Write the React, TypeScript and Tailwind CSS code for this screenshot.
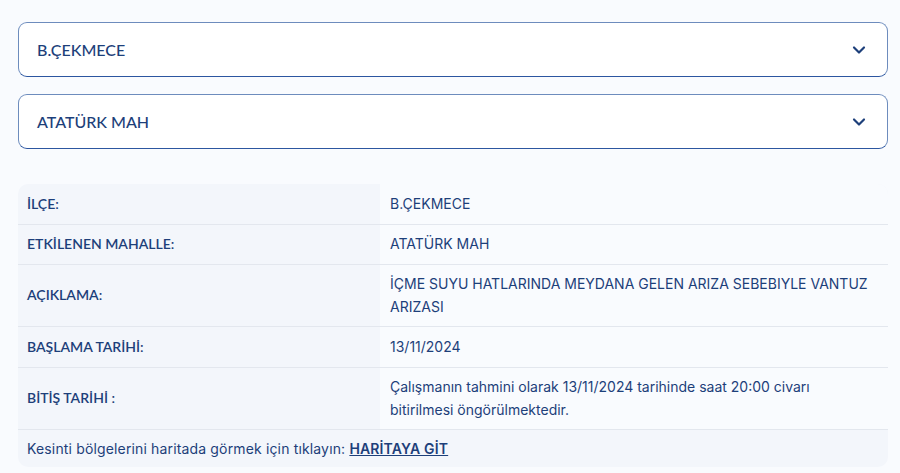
import React from "react";

const rows = [
  { label: "İLÇE:", value: "B.ÇEKMECE", h: "min-h-[40px]" },
  { label: "ETKİLENEN MAHALLE:", value: "ATATÜRK MAH", h: "min-h-[39px]" },
  {
    label: "AÇIKLAMA:",
    value: "İÇME SUYU HATLARINDA MEYDANA GELEN ARIZA SEBEBIYLE VANTUZ ARIZASI",
    h: "min-h-[61px]",
  },
  { label: "BAŞLAMA TARİHİ:", value: "13/11/2024", h: "min-h-[40px]" },
  {
    label: "BİTİŞ TARİHİ :",
    value: "Çalışmanın tahmini olarak 13/11/2024 tarihinde saat 20:00 civarı bitirilmesi öngörülmektedir.",
    h: "min-h-[61px]",
  },
];

function Chevron() {
  return (
    <svg width="20" height="20" viewBox="0 0 24 24" fill="none" stroke="#1d3f7a" strokeWidth="2.6" strokeLinecap="round" strokeLinejoin="round">
      <path d="M6 9l6 6 6-6" />
    </svg>
  );
}

function Select({ value }: { value: string }) {
  return (
    <div className="flex h-[55px] items-center justify-between rounded-[9px] border border-[#6d8cbd] border-b-[#2c56a0] bg-white px-[18px] text-[16px] font-medium text-[#1d3f7a]">
      <span>{value}</span>
      <Chevron />
    </div>
  );
}

export default function App() {
  return (
    <div
      className="min-h-[473px] bg-[#f9fbfe] px-[18px] pt-[22px] text-[#1d3f7a]"
      style={{ fontFamily: "Lato, 'Noto Sans', sans-serif" }}
    >
      <div className="flex w-[870px] flex-col gap-[17px]">
        <Select value="B.ÇEKMECE" />
        <Select value="ATATÜRK MAH" />
      </div>
      <div className="mt-[35px] w-[870px] overflow-hidden rounded-[10px] bg-[#f3f6fb] text-[14px]">
        {rows.map((r) => (
          <div key={r.label} className="flex border-b border-[#e3e7ee]">
            <div className={"flex w-[362px] items-center px-[9px] pb-[2px] font-semibold " + r.h}>
              {r.label}
            </div>
            <div className="flex flex-1 items-center bg-[#f9fbfe] pt-[6px] pb-[8px] pl-[10px] pr-[12px] font-['Inter'] text-[14px] leading-[23px]">
              {r.value}
            </div>
          </div>
        ))}
        <div className="flex h-[37px] items-center px-[9px] font-['Inter'] text-[14px] tracking-[0.15px]">
          <span>Kesinti bölgelerini haritada görmek için tıklayın:&nbsp;</span>
          <a href="#" className="font-semibold underline">HARİTAYA GİT</a>
        </div>
      </div>
    </div>
  );
}
